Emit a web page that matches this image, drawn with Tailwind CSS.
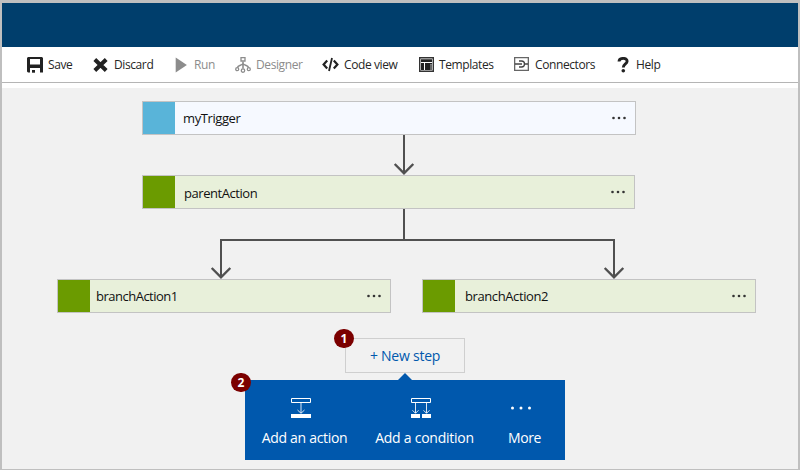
<!DOCTYPE html>
<html lang="en">
<head>
<meta charset="utf-8">
<title>Designer</title>
<script src="https://cdn.jsdelivr.net/npm/@tailwindcss/browser@4"></script>
</head>
<body class="h-[470px] w-[800px] overflow-hidden font-['Open_Sans','Noto_Sans',sans-serif] text-[#262626]">
<div class="flex h-[470px] w-[800px] flex-col border-x-2 border-t-[3px] border-b border-[#bfbfbf] bg-white">
  <header class="h-11 shrink-0 bg-[#003e6c]"></header>

  <nav class="flex h-9 shrink-0 items-center border-b border-[#b5b5b5] pl-[25px] text-[12px] leading-4 whitespace-nowrap">
    <button class="flex w-[66px] items-center gap-[5px]">
      <svg class="size-4 shrink-0" viewBox="0 0 16 16"><path fill="#222" fill-rule="evenodd" d="M1 0H15L16 1V15.5H13V11H3V15.5H1L0 14.5V1ZM3 2V7.5H13V2Z"/><path fill="#222" d="M5 13H8V15.7H5Z"/></svg>
      <span class="tracking-[-0.4px]">Save</span>
    </button>
    <button class="flex w-[81px] items-center gap-[6px]">
      <svg class="h-4 w-[15px] shrink-0" viewBox="0 0 15 16"><path stroke="#222" stroke-width="4" d="M1.8 2.5 13.2 13.5M13.2 2.5 1.8 13.5"/></svg>
      <span class="tracking-[-0.4px]">Discard</span>
    </button>
    <button class="flex w-[61px] items-center gap-[7px] text-[#8c8c8c]">
      <svg class="h-4 w-[13px] shrink-0" viewBox="0 0 13 16"><path fill="#8c8c8c" d="M1.7 .5 12.9 8 1.7 15.5Z"/></svg>
      <span class="tracking-[-0.4px]">Run</span>
    </button>
    <button class="flex w-[87px] items-center gap-[5px] text-[#8c8c8c]">
      <svg class="size-4 shrink-0" viewBox="0 0 16 16" fill="none" stroke="#8c8c8c" stroke-width="1.3"><path d="M6 .7H10V4H6Z"/><path stroke-width="1.6" d="M8 4.5V11.5M8 6.5C7 8.5 3 8 2.5 10.5M8 6.5C9 8.5 13 8 13.5 10.5"/><circle cx="2.2" cy="12.2" r="1.5"/><circle cx="13.8" cy="12.2" r="1.5"/><circle cx="8" cy="13.6" r="1.7"/></svg>
      <span class="tracking-[-0.4px]">Designer</span>
    </button>
    <button class="flex w-[97px] items-center gap-[5px]">
      <svg class="h-4 w-[17px] shrink-0" viewBox="0 0 17 16" fill="none" stroke="#222" stroke-width="2.2"><path d="M5.2 3.5 1.6 7.5 5.2 11.5M11.8 3.5 15.4 7.5 11.8 11.5"/><path stroke-width="1.8" d="M10 1 7 14"/></svg>
      <span class="tracking-[-0.4px]">Code view</span>
    </button>
    <button class="flex w-[95px] items-center gap-[5px]">
      <svg class="h-4 w-[15px] shrink-0" viewBox="0 0 15 16"><path fill="none" stroke="#333" stroke-width="1.4" d="M.7 .7H14.3V14.3H.7Z"/><path fill="#222" d="M2 2.2H13V5H2ZM2 6H5V13H2ZM6 6H13V7.5H11V13H6Z"/><path fill="#666" d="M11 7.5H13V13H11Z"/></svg>
      <span class="tracking-[-0.4px]">Templates</span>
    </button>
    <button class="flex w-[103px] items-center gap-[6px]">
      <svg class="h-4 w-[15px] shrink-0" viewBox="0 0 15 16" fill="none" stroke="#666" stroke-width="1.3"><path d="M.65 .65H14.35V13.35H.65Z"/><path stroke="#444" d="M1 7H8M5 4H7.5A3 3 0 0 1 7.5 10H5M10.5 7H14"/></svg>
      <span class="tracking-[-0.4px]">Connectors</span>
    </button>
    <button class="flex items-center gap-[6px]">
      <svg class="h-4 w-[13px] shrink-0" viewBox="0 0 13 16" fill="none"><path stroke="#222" stroke-width="2.9" d="M2 4.5C2.2 .4 10.2 .4 10.1 4.2C10 7 6.3 6.8 6.3 10.6"/><circle cx="6.3" cy="13.8" r="1.8" fill="#222"/></svg>
      <span class="tracking-[-0.4px]">Help</span>
    </button>
  </nav>

  <!-- Designer canvas -->
  <main class="relative mt-[5px] flex-1 bg-[#f1f1f1] text-[13px] leading-4 whitespace-nowrap text-[#111]">
    <svg class="absolute top-0 left-0" width="796" height="381" viewBox="2 88 796 381" fill="none" stroke="#505050" stroke-width="2">
      <path d="M404 135V173M404 209V240M221 277V240H614V277"/>
      <path stroke-width="2.4" d="M394.7 164 404 173.3 413.3 164M211.7 268 221 277.3 230.3 268M604.7 268 614 277.3 623.3 268"/>
    </svg>

    <div class="absolute top-[13px] left-[140px] flex h-[34px] w-[494px] items-center border border-[#c3c3c3] bg-[#f6f9ff] pr-[8px]">
      <div class="h-full w-8 bg-[#59b4d9]"></div>
      <span class="ml-2 flex-1 tracking-[-0.4px]">myTrigger</span>
      <svg width="16" height="4" viewBox="0 0 16 4" class="mb-px" fill="#333"><circle cx="2.5" cy="2" r="1.3"/><circle cx="8" cy="2" r="1.3"/><circle cx="13.5" cy="2" r="1.3"/></svg>
    </div>
    <div class="absolute top-[87px] left-[140px] flex h-[34px] w-[493px] items-center border border-[#c3c3c3] bg-[#e8f0da] pr-[8px]">
      <div class="h-full w-8 bg-[#6b9b00]"></div>
      <span class="mt-[2px] ml-[9px] flex-1 tracking-[-0.45px]">parentAction</span>
      <svg width="16" height="4" viewBox="0 0 16 4" class="mb-px" fill="#333"><circle cx="2.5" cy="2" r="1.3"/><circle cx="8" cy="2" r="1.3"/><circle cx="13.5" cy="2" r="1.3"/></svg>
    </div>
    <div class="absolute top-[191px] left-[55px] flex h-[34px] w-[334px] items-center border border-[#c3c3c3] bg-[#e8f0da] pr-[8px]">
      <div class="h-full w-8 bg-[#6b9b00]"></div>
      <span class="ml-[6px] flex-1 tracking-[-0.5px]">branchAction1</span>
      <svg width="16" height="4" viewBox="0 0 16 4" class="mb-px" fill="#333"><circle cx="2.5" cy="2" r="1.3"/><circle cx="8" cy="2" r="1.3"/><circle cx="13.5" cy="2" r="1.3"/></svg>
    </div>
    <div class="absolute top-[191px] left-[420px] flex h-[34px] w-[334px] items-center border border-[#c3c3c3] bg-[#e8f0da] pr-[8px]">
      <div class="h-full w-8 bg-[#6b9b00]"></div>
      <span class="ml-[10px] flex-1 tracking-[-0.4px]">branchAction2</span>
      <svg width="16" height="4" viewBox="0 0 16 4" class="mb-px" fill="#333"><circle cx="2.5" cy="2" r="1.3"/><circle cx="8" cy="2" r="1.3"/><circle cx="13.5" cy="2" r="1.3"/></svg>
    </div>

    <button class="absolute top-[250px] left-[343px] flex h-[35px] w-[120px] items-center justify-center border border-[#cfcfcf] pt-px text-[14px] leading-4 text-[#0058ad]"><span class="tracking-[-0.25px]">+ New step</span></button>

    <div class="absolute top-[292px] left-[243px] flex h-[80px] w-[320px] bg-[#0058ad] pt-[18px] text-[14px] leading-4 text-white">
      <svg class="absolute -top-[7px] left-[153px]" width="14" height="7" viewBox="0 0 14 7"><path fill="#0058ad" d="M0 7 7 0 14 7Z"/></svg>
      <button class="flex w-[119px] flex-col items-center gap-3">
        <svg class="-ml-[7px]" width="20" height="20" viewBox="0 0 20 20" fill="none" stroke="#fff"><path d="M.5 .5H19.5V4.5H.5Z"/><path stroke-opacity=".85" d="M10 5V15M6.5 12 10 15.3 13.5 12"/><path fill="#fff" stroke="none" d="M0 16H20V20H0Z"/></svg>
        <span class="tracking-[-0.3px]">Add an action</span>
      </button>
      <button class="flex w-[121px] flex-col items-center gap-3">
        <svg class="-ml-[7px]" width="20" height="20" viewBox="0 0 20 20" fill="none" stroke="#fff"><path d="M.5 .5H19.5V4.5H.5Z"/><path stroke-opacity=".85" d="M4.5 5V15M1.5 12.3 4.5 15.3 7.5 12.3M15.5 5V15M12.5 12.3 15.5 15.3 18.5 12.3"/><path fill="#fff" stroke="none" d="M0 16H9V20H0ZM11 16H20V20H11Z"/></svg>
        <span class="tracking-[-0.25px]">Add a condition</span>
      </button>
      <button class="flex w-[79px] flex-col items-center gap-3">
        <svg class="-ml-[7px]" width="20" height="20" viewBox="0 0 20 20" fill="#fff"><circle cx="1.5" cy="10" r="1.5"/><circle cx="10" cy="10" r="1.5"/><circle cx="18.5" cy="10" r="1.5"/></svg>
        <span class="tracking-[-0.4px]">More</span>
      </button>
    </div>

    <span class="absolute top-[241px] left-[332px] flex h-[19px] w-5 items-center justify-center rounded-full bg-[#7b0000] text-[12px] font-bold text-white">1</span>
    <span class="absolute top-[285px] left-[229px] flex h-[19px] w-5 items-center justify-center rounded-full bg-[#7b0000] text-[12px] font-bold text-white">2</span>
  </main>
</div>
</body>
</html>
